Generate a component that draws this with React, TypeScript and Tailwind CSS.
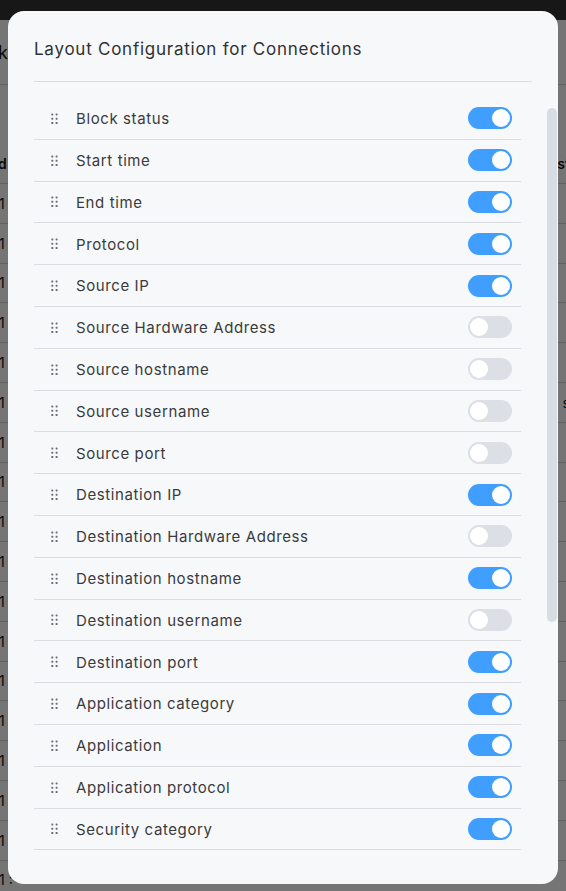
import React from "react";

const items: [string, boolean][] = [
  ["Block status", true],
  ["Start time", true],
  ["End time", true],
  ["Protocol", true],
  ["Source IP", true],
  ["Source Hardware Address", false],
  ["Source hostname", false],
  ["Source username", false],
  ["Source port", false],
  ["Destination IP", true],
  ["Destination Hardware Address", false],
  ["Destination hostname", true],
  ["Destination username", false],
  ["Destination port", true],
  ["Application category", true],
  ["Application", true],
  ["Application protocol", true],
  ["Security category", true],
];

function DragIcon() {
  return (
    <svg width="8" height="12" viewBox="0 0 8 12" className="shrink-0" fill="#6b6e73">
      <rect x="0.3" y="0.4" width="2" height="2" rx="0.6" />
      <rect x="4.6" y="0.4" width="2" height="2" rx="0.6" />
      <rect x="0.3" y="4.7" width="2" height="2" rx="0.6" />
      <rect x="4.6" y="4.7" width="2" height="2" rx="0.6" />
      <rect x="0.3" y="9" width="2" height="2" rx="0.6" />
      <rect x="4.6" y="9" width="2" height="2" rx="0.6" />
    </svg>
  );
}

function Toggle({ on }: { on: boolean }) {
  return (
    <div
      className={
        "w-[44px] h-[22px] rounded-full flex items-center px-[2px] " +
        (on ? "bg-[#409eff] justify-end" : "bg-[#dcdfe6] justify-start")
      }
    >
      <div className="w-[18px] h-[18px] rounded-full bg-white" />
    </div>
  );
}

const bgRows = Array.from({ length: 18 });

export default function App() {
  return (
    <div
      className="relative w-[566px] h-[891px] overflow-hidden bg-white"
      style={{ fontFamily: "Inter, 'Noto Sans', sans-serif" }}
    >
      {/* background page */}
      <div className="flex flex-col text-[#111] text-[14px]">
        <div className="h-[20px] bg-[#333333]" />
        <div className="h-[65px] border-b border-[#d4d4d4] flex items-center whitespace-nowrap">
          <span className="ml-[-2px] text-[18px]">k</span>
        </div>
        <div className="h-[59px]" />
        <div className="h-[40px] border-b border-[#d4d4d4] flex items-center justify-between font-semibold whitespace-nowrap">
          <span className="ml-[-2px]">d</span>
          <span className="mr-[-4px]">st</span>
        </div>
        {bgRows.map((_, i) => (
          <div
            key={i}
            className="h-[39.8px] border-b border-[#d4d4d4] flex items-center justify-between whitespace-nowrap"
          >
            <span className="ml-[-1px]">1 :</span>
            {i === 5 ? <span className="mr-[-4px]">s</span> : null}
          </div>
        ))}
      </div>

      {/* overlay */}
      <div className="absolute inset-0 bg-[rgba(0,0,0,0.54)]" />

      {/* modal */}
      <div className="absolute left-[8px] top-[11px] w-[550px] h-[873px] rounded-[16px] bg-[#f7f8fa] pl-[26px] pr-[18px] pt-[26px]">
        <div className="pr-[8px]">
          <h2 className="text-[17px] leading-[24px] tracking-[0.75px] text-[#303133] font-normal">
            Layout Configuration for Connections
          </h2>
          <div className="mt-[20px] border-t border-[#dcdde0]" />
        </div>
        <div className="mt-[16px] w-[487px]">
          {items.map(([label, on]) => (
            <div
              key={label}
              className="h-[41.8px] border-b border-[#dcdde3] flex items-center"
            >
              <div className="ml-[17px] w-[25px] pt-[1px]">
                <DragIcon />
              </div>
              <span className="flex-1 text-[15px] tracking-[0.6px] text-[#3a3b3d] pt-[2px]">{label}</span>
              <div className="mr-[9px]">
                <Toggle on={on} />
              </div>
            </div>
          ))}
        </div>
        {/* scrollbar thumb */}
        <div className="absolute left-[539px] top-[97px] w-[10px] h-[514px] rounded-full bg-[#d8dce3]" />
      </div>
    </div>
  );
}
